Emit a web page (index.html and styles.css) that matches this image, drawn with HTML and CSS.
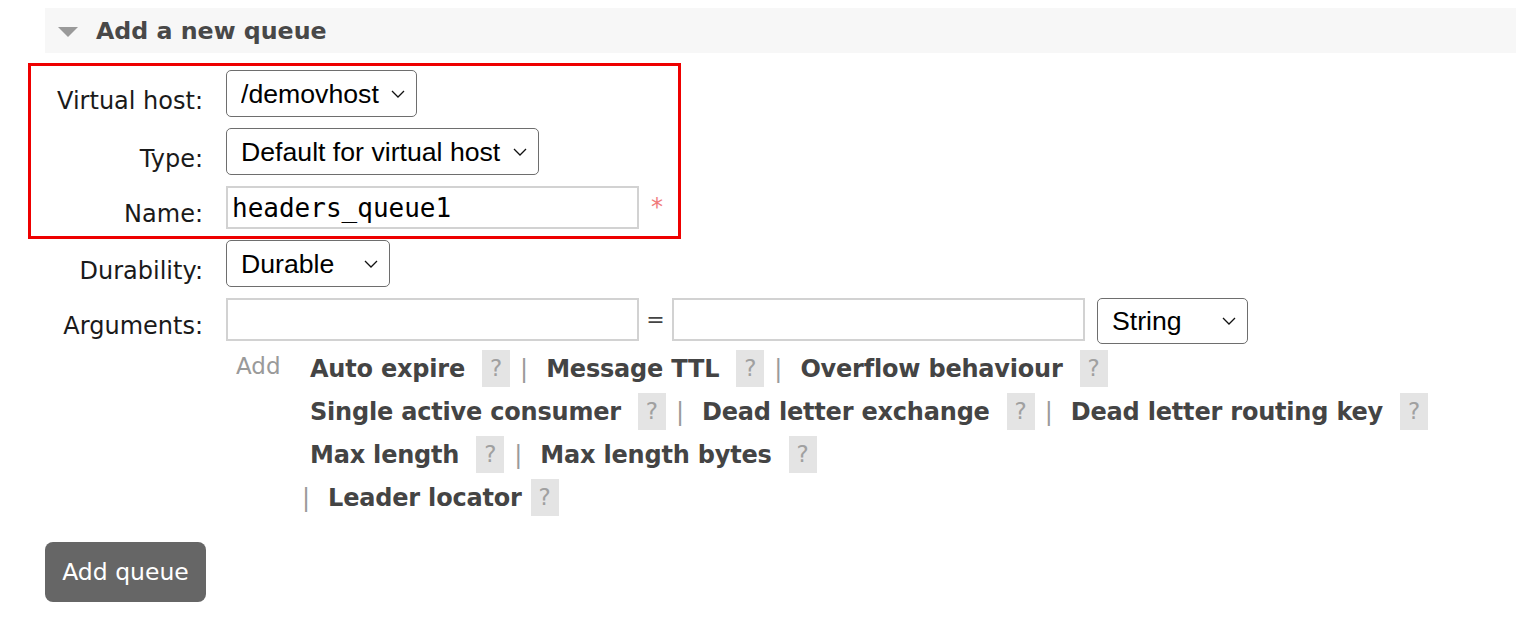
FILE: index.html
```html
<!DOCTYPE html>
<html>
<head>
<meta charset="utf-8">
<title>Add a new queue</title>
<link rel="stylesheet" href="styles.css">
</head>
<body>
<div class="page">
  <div class="section-head">
    <span class="tri"></span>
    <h2>Add a new queue</h2>
  </div>

  <div class="form">
    <div class="row">
      <label class="lbl">Virtual host:</label>
      <span class="sel w-vhost">
        <select><option>/demovhost</option></select>
        <svg class="chev" viewBox="0 0 14 8"><path d="M1 1 L7 7 L13 1" fill="none" stroke="#111" stroke-width="1.3"/></svg>
      </span>
    </div>
    <div class="row">
      <label class="lbl">Type:</label>
      <span class="sel w-type">
        <select><option>Default for virtual host</option></select>
        <svg class="chev" viewBox="0 0 14 8"><path d="M1 1 L7 7 L13 1" fill="none" stroke="#111" stroke-width="1.3"/></svg>
      </span>
    </div>
    <div class="row">
      <label class="lbl lbl-input">Name:</label>
      <input class="txt" type="text" value="headers_queue1">
      <span class="req">*</span>
    </div>
    <div class="row">
      <label class="lbl">Durability:</label>
      <span class="sel w-dur">
        <select><option>Durable</option></select>
        <svg class="chev" viewBox="0 0 14 8"><path d="M1 1 L7 7 L13 1" fill="none" stroke="#111" stroke-width="1.3"/></svg>
      </span>
    </div>
    <div class="row row-args">
      <label class="lbl lbl-input">Arguments:</label>
      <input class="txt" type="text">
      <span class="eq">=</span>
      <input class="txt" type="text">
      <span class="sel w-str">
        <select><option>String</option></select>
        <svg class="chev" viewBox="0 0 14 8"><path d="M1 1 L7 7 L13 1" fill="none" stroke="#111" stroke-width="1.3"/></svg>
      </span>
    </div>

    <div class="arg-links">
      <span class="add">Add</span>
      <div class="link-lines">
        <div class="line">
          <span class="link">Auto expire</span><span class="help">?</span><span class="sep">|</span>
          <span class="link">Message TTL</span><span class="help">?</span><span class="sep">|</span>
          <span class="link">Overflow behaviour</span><span class="help">?</span>
        </div>
        <div class="line">
          <span class="link">Single active consumer</span><span class="help">?</span><span class="sep">|</span>
          <span class="link">Dead letter exchange</span><span class="help">?</span><span class="sep">|</span>
          <span class="link">Dead letter routing key</span><span class="help">?</span>
        </div>
        <div class="line">
          <span class="link">Max length</span><span class="help">?</span><span class="sep">|</span>
          <span class="link">Max length bytes</span><span class="help">?</span>
        </div>
        <div class="line line-last">
          <span class="sep sep-lead">|</span>
          <span class="link">Leader locator</span><span class="help help-tight">?</span>
        </div>
      </div>
    </div>

    <button class="btn">Add queue</button>
  </div>
</div>
<div class="highlight"></div>
</body>
</html>
```

FILE: styles.css
```css
html, body {
  margin: 0;
  padding: 0;
  background: #fff;
}
body {
  position: relative;
  font-family: "DejaVu Sans", Verdana, sans-serif;
  color: #1e1e1e;
  width: 1516px;
  height: 628px;
  overflow: hidden;
}
.page {
  padding: 8px 0 0 45px;
}
.section-head {
  height: 45px;
  background: #f7f7f7;
  display: flex;
  align-items: center;
  padding-left: 13px;
}
.tri {
  width: 0;
  height: 0;
  border-left: 10px solid transparent;
  border-right: 10px solid transparent;
  border-top: 10px solid #9a9a9a;
  margin-right: 18px;
  margin-top: 2px;
}
.section-head h2 {
  margin: 0;
  font-size: 23.7px;
  font-weight: bold;
  color: #484848;
}
.form {
  padding-top: 17px;
}
.row {
  display: flex;
  align-items: flex-start;
  margin-bottom: 11px;
}
.lbl {
  box-sizing: border-box;
  width: 181px;
  padding-right: 23px;
  padding-top: 18px;
  text-align: right;
  font-size: 24px;
  line-height: 26px;
  color: #1a1a1a;
}
.lbl-input {
  padding-top: 15px;
}
.sel {
  position: relative;
  display: inline-block;
}
.sel select {
  appearance: none;
  -webkit-appearance: none;
  box-sizing: border-box;
  height: 47px;
  margin: 0;
  border: 1px solid #6e6e6e;
  border-radius: 5px;
  background: #fff;
  color: #000;
  font-family: "Liberation Sans", Arial, sans-serif;
  font-size: 26.67px;
  padding: 0 30px 0 14px;
}
.w-vhost select { width: 191px; }
.w-type select { width: 313px; }
.w-dur select { width: 164px; }
.w-str select { width: 151px; }
.chev {
  position: absolute;
  right: 12px;
  top: 50%;
  margin-top: -4px;
  width: 14px;
  height: 8px;
  pointer-events: none;
}
.txt {
  box-sizing: border-box;
  width: 413px;
  height: 43px;
  margin: 0;
  border: 2px solid #d2d2d2;
  background: #fff;
  padding: 0 4px;
  font-family: "DejaVu Sans Mono", monospace;
  font-size: 26px;
  color: #000;
  outline: none;
}
.req {
  margin-left: 12px;
  margin-top: 7px;
  font-size: 24px;
  color: #f07a7a;
}
.eq {
  width: 33px;
  text-align: center;
  font-size: 22px;
  line-height: 43px;
  color: #444;
}
.row-args .sel {
  margin-left: 12px;
}
.row-args {
  margin-bottom: 3px;
}
.row-args .sel select {
  height: 46px;
}
.arg-links {
  display: flex;
  align-items: flex-start;
  margin-left: 181px;
}
.add {
  box-sizing: border-box;
  width: 84px;
  padding-left: 10px;
  padding-top: 4px;
  font-size: 23px;
  line-height: 30px;
  color: #9a9a9a;
}
.link-lines {
  display: flex;
  flex-direction: column;
}
.line {
  height: 43px;
  display: flex;
  align-items: center;
  white-space: nowrap;
}
.link {
  font-size: 24px;
  font-weight: bold;
  letter-spacing: -0.2px;
  color: #444;
}
.help {
  display: inline-block;
  width: 28px;
  height: 37px;
  line-height: 37px;
  margin-left: 17px;
  background: #e4e4e4;
  color: #a0a0a0;
  text-align: center;
  font-size: 23px;
}
.help-tight {
  margin-left: 9px;
}
.sep {
  display: inline-block;
  margin: 0 18px 0 10px;
  font-size: 24px;
  color: #9a9a9a;
}
.line-last {
  margin-left: -8px;
}
.sep-lead {
  margin: 0 18px 0 0;
}
.btn {
  display: block;
  margin-top: 23px;
  height: 60px;
  width: 161px;
  border: none;
  border-radius: 8px;
  background: #666;
  color: #fff;
  font-family: "DejaVu Sans", Verdana, sans-serif;
  font-size: 23.5px;
  padding: 0;
}
.highlight {
  position: absolute;
  left: 28px;
  top: 63px;
  width: 653px;
  height: 176px;
  box-sizing: border-box;
  border: 3px solid #ee0000;
  pointer-events: none;
}
```
